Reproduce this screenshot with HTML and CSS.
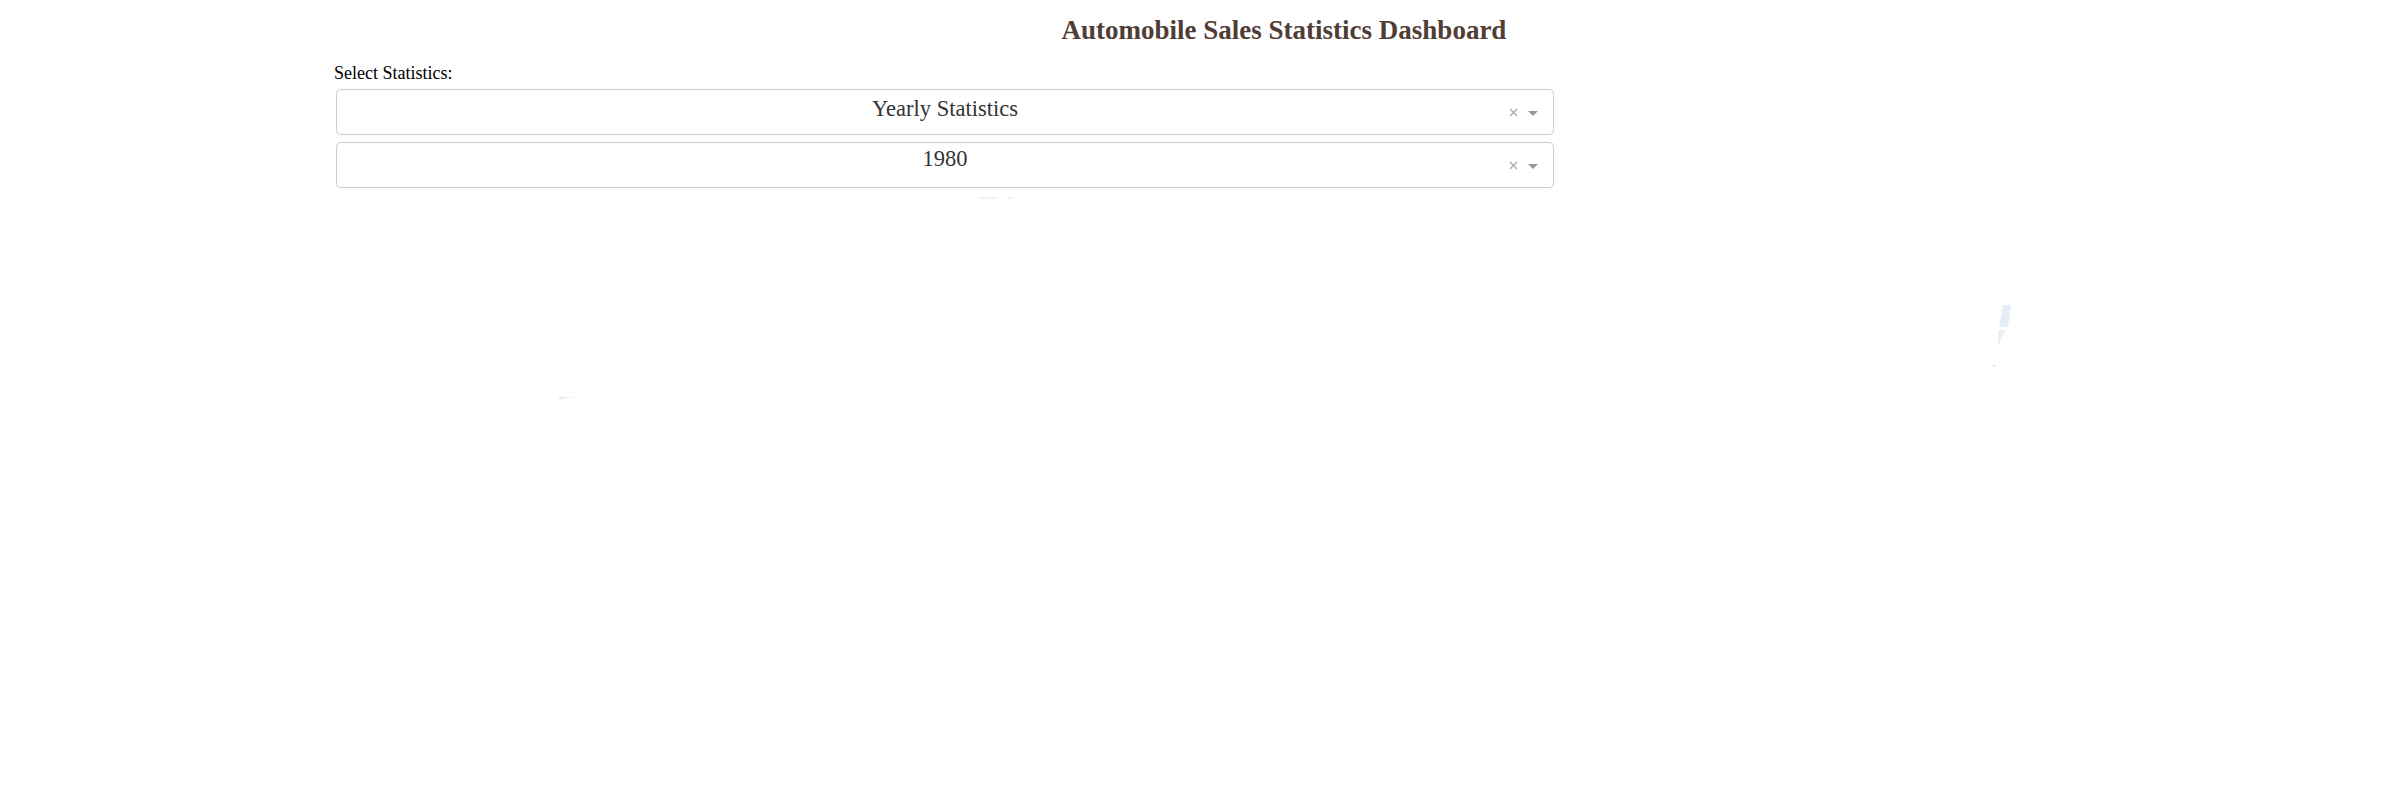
FILE: index.html
```html
<!DOCTYPE html>
<html>
<head>
<meta charset="utf-8">
<title>Automobile Sales Statistics Dashboard</title>
<link rel="stylesheet" href="styles.css">
</head>
<body>
<div class="page">
  <h1 class="title">Automobile Sales Statistics Dashboard</h1>
  <div class="controls">
    <label class="label">Select Statistics:</label>
    <div class="dropdown">
      <div class="value value-first">Yearly Statistics</div>
      <div class="indicators">
        <svg class="clear" width="9" height="9" viewBox="0 0 9 9"><path d="M1 1L8 8M8 1L1 8" stroke="#a3a3a3" stroke-width="1.1" fill="none"/></svg>
        <span class="arrow"></span>
      </div>
    </div>
    <div class="dropdown">
      <div class="value value-second">1980</div>
      <div class="indicators">
        <svg class="clear" width="9" height="9" viewBox="0 0 9 9"><path d="M1 1L8 8M8 1L1 8" stroke="#a3a3a3" stroke-width="1.1" fill="none"/></svg>
        <span class="arrow"></span>
      </div>
    </div>
  </div>
  <div class="graphs">
    <svg class="canvas" viewBox="0 190 2388 607" width="2388" height="607">
      <rect x="980" y="197" width="16" height="2" fill="#f3f3f3"/>
      <rect x="1007" y="197" width="6" height="2" fill="#f5f5f5"/>
      <polygon points="2003,305 2011,305 2008,327 1999,327" fill="#e7edf7"/>
      <polygon points="1998,330 2006,330 1998,345" fill="#e9eef7"/>
      <rect x="1993" y="365" width="2" height="2" fill="#e2e5ea"/>
      <rect x="559" y="397" width="6" height="2" fill="#e4eaf4"/>
      <rect x="565" y="397" width="9" height="1" fill="#f0f3f9"/>
    </svg>
  </div>
</div>
</body>
</html>
```

FILE: styles.css
```css
html, body {
  margin: 0;
  padding: 0;
  background: #ffffff;
}

.page {
  font-family: "Liberation Serif", "Times New Roman", serif;
  width: 2388px;
}

.title {
  margin: 0;
  padding: 15px 0 0 180px;
  font-size: 27px;
  line-height: 31px;
  font-weight: bold;
  color: #503d36;
  text-align: center;
}

.controls {
  display: flex;
  flex-direction: column;
  align-items: flex-start;
  gap: 7px;
  padding: 17px 0 0 334px;
}

.label {
  font-size: 18px;
  line-height: 21px;
  color: #000000;
  margin-bottom: -2px;
}

.dropdown {
  position: relative;
  box-sizing: border-box;
  width: 1218px;
  height: 46px;
  margin-left: 2px;
  border: 1px solid #cccccc;
  border-radius: 4.5px;
  background: #ffffff;
}

.value {
  font-size: 22.5px;
  color: #333333;
  text-align: center;
}

.value-first {
  line-height: 37px;
}

.value-second {
  line-height: 32px;
}

.indicators {
  position: absolute;
  top: 0;
  bottom: 0;
  right: 15px;
  display: flex;
  align-items: center;
  gap: 10px;
}

.clear {
  display: block;
}

.arrow {
  display: block;
  width: 0;
  height: 0;
  margin-top: 3px;
  border-top: 5px solid #999999;
  border-left: 5px solid transparent;
  border-right: 5px solid transparent;
}

.graphs {
  margin-top: 2px;
}

.canvas {
  display: block;
}
```
